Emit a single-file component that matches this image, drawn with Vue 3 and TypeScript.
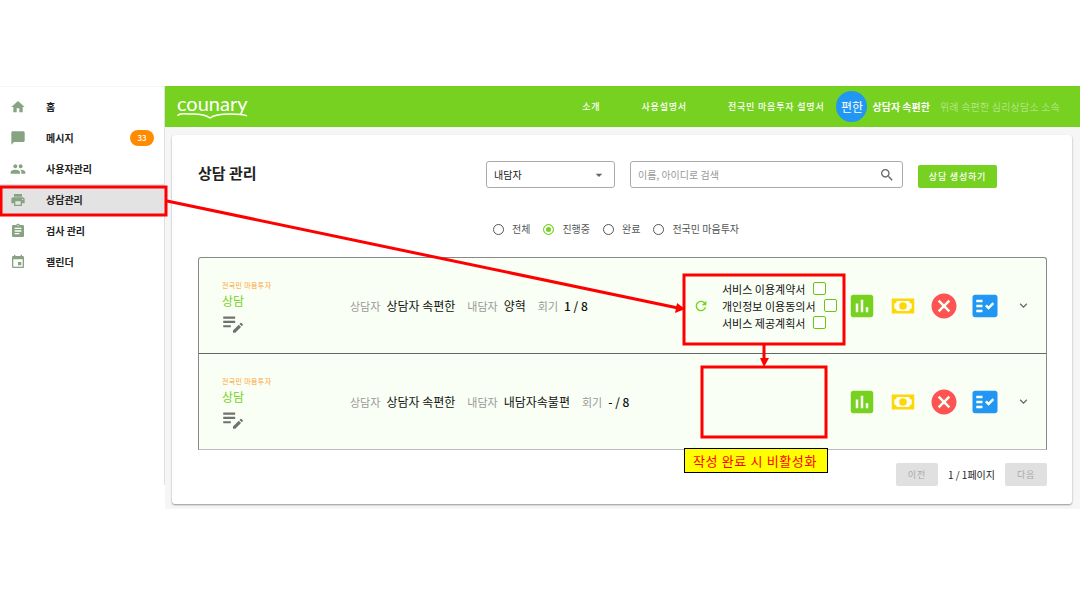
<script setup lang="ts">
import { ref } from 'vue'

interface MenuItem {
  label: string
  icon: string
  badge?: number
  active?: boolean
}

interface Session {
  id: number
  counselor: string
  client: string
  round: string
  documents: string[]
}

const menu: MenuItem[] = [
  { label: '홈', icon: 'M10 20v-6h4v6h5v-8h3L12 3 2 12h3v8z' },
  { label: '메시지', icon: 'M20 2H4c-1.1 0-2 .9-2 2v18l4-4h14c1.1 0 2-.9 2-2V4c0-1.100-.9-2-2-2z', badge: 33 },
  {
    label: '사용자관리',
    icon: 'M16 11c1.660 0 2.990-1.340 2.990-3S17.660 5 16 5s-3 1.340-3 3 1.340 3 3 3zm-8 0c1.660 0 2.990-1.340 2.990-3S9.660 5 8 5 5 6.340 5 8s1.340 3 3 3zm0 2c-2.330 0-7 1.170-7 3.500V19h14v-2.500c0-2.330-4.670-3.500-7-3.500zm8 0c-.29 0-.62.02-.97.05 1.160.84 1.970 1.970 1.970 3.450V19h6v-2.500c0-2.330-4.670-3.500-7-3.500z',
  },
  {
    label: '상담관리',
    icon: 'M19 8H5c-1.660 0-3 1.340-3 3v6h4v4h12v-4h4v-6c0-1.660-1.340-3-3-3zm-3 11H8v-5h8v5zm3-7c-.55 0-1-.45-1-1s.45-1 1-1 1 .45 1 1-.45 1-1 1zm-1-9H6v4h12V3z',
    active: true,
  },
  {
    label: '검사 관리',
    icon: 'M19 3h-4.180C14.400 1.840 13.300 1 12 1s-2.400.84-2.820 2H5c-1.100 0-2 .9-2 2v14c0 1.100.9 2 2 2h14c1.100 0 2-.9 2-2V5c0-1.100-.9-2-2-2zm-7 0c.55 0 1 .45 1 1s-.45 1-1 1-1-.45-1-1 .45-1 1-1zm2 14H7v-2h7v2zm3-4H7v-2h10v2zm0-4H7V7h10v2z',
  },
  {
    label: '캘린더',
    icon: 'M17 12h-5v5h5v-5zM16 1v2H8V1H6v2H5c-1.110 0-1.990.9-1.990 2L3 19c0 1.100.89 2 2 2h14c1.100 0 2-.9 2-2V5c0-1.100-.9-2-2-2h-1V1h-2zm3 18H5V8h14v11z',
  },
]

const links = ['소개', '사용설명서', '전국민 마음투자 설명서']
const statuses = ['전체', '진행중', '완료', '전국민 마음투자']
const status = ref('진행중')
const searchField = ref('내담자')
const keyword = ref('')

const sessions: Session[] = [
  {
    id: 1,
    counselor: '상담자 속편한',
    client: '양혁',
    round: '1 / 8',
    documents: ['서비스 이용계약서', '개인정보 이용동의서', '서비스 제공계획서'],
  },
  { id: 2, counselor: '상담자 속편한', client: '내담자속불편', round: '- / 8', documents: [] },
]

const actions = [
  {
    name: '통계',
    color: 'green',
    path: 'M19 3H5c-1.100 0-2 .9-2 2v14c0 1.100.9 2 2 2h14c1.100 0 2-.9 2-2V5c0-1.100-.9-2-2-2zM9 17H7v-7h2v7zm4 0h-2V7h2v10zm4 0h-2v-4h2v4z',
  },
  {
    name: '결제',
    color: 'yellow',
    path: 'M3 6H21V18H3V6M12 9A3 3 0 0 1 15 12A3 3 0 0 1 12 15A3 3 0 0 1 9 12A3 3 0 0 1 12 9M7 8A2 2 0 0 1 5 10V14A2 2 0 0 1 7 16H17A2 2 0 0 1 19 14V10A2 2 0 0 1 17 8H7Z',
  },
  {
    name: '취소',
    color: 'red',
    path: 'M12 2C6.470 2 2 6.470 2 12s4.470 10 10 10 10-4.470 10-10S17.530 2 12 2zm5 13.590L15.590 17 12 13.410 8.410 17 7 15.590 10.590 12 7 8.410 8.410 7 12 10.590 15.590 7 17 8.410 13.410 12 17 15.590z',
  },
  {
    name: '기록 확인',
    color: 'blue',
    path: 'M20 3H4C2.900 3 2 3.900 2 5v14c0 1.100.9 2 2 2h16c1.100 0 2-.9 2-2V5C22 3.900 21.100 3 20 3zM10 17H5v-2h5V17zM10 13H5v-2h5V13zM10 9H5V7h5V9zM14.820 15L12 12.160l1.410-1.410l1.410 1.420L17.990 9l1.420 1.420L14.820 15z',
  },
]
</script>

<template>
  <div class="page">
    <div class="shell">
      <nav class="sidebar" aria-label="주 메뉴">
        <a v-for="item in menu" :key="item.label" href="#" class="menu-item" :class="{ active: item.active }">
          <svg class="menu-icon" viewBox="0 0 24 24" aria-hidden="true"><path :d="item.icon" /></svg>
          <span class="menu-label">{{ item.label }}</span>
          <span v-if="item.badge" class="badge">{{ item.badge }}</span>
        </a>
      </nav>

      <div class="main">
        <header class="topbar">
          <a href="#" class="logo">
            <span class="logo-text">counary</span>
            <svg class="logo-line" viewBox="0 0 72 8" aria-hidden="true">
              <path d="M1 4C1 1 8 2 16 2C24 2 29 3 33 6C38 2 46 2 53 2C61 2 67 2 70 4" />
            </svg>
          </a>
          <div class="links">
            <a v-for="link in links" :key="link" href="#">{{ link }}</a>
          </div>
          <span class="avatar">편한</span>
          <strong class="user-name">상담자 속편한</strong>
          <span class="user-org">위례 속편한 심리상담소 소속</span>
        </header>

        <main class="card">
          <div class="toolbar">
            <h1>상담 관리</h1>
            <div class="select-box">
              <select v-model="searchField" aria-label="검색 대상">
                <option>내담자</option>
                <option>상담자</option>
              </select>
              <svg viewBox="0 0 24 24" aria-hidden="true"><path d="M7 10l5 5 5-5z" /></svg>
            </div>
            <div class="search-box">
              <input v-model="keyword" type="text" placeholder="이름, 아이디로 검색" aria-label="검색어" />
              <svg viewBox="0 0 24 24" aria-hidden="true">
                <path d="M15.500 14h-.79l-.28-.27C15.410 12.590 16 11.110 16 9.500 16 5.910 13.090 3 9.500 3S3 5.910 3 9.500 5.910 16 9.500 16c1.610 0 3.090-.59 4.230-1.570l.27.28v.79l5 4.990L20.490 19l-4.990-5zm-6 0C7.010 14 5 11.990 5 9.500S7.010 5 9.500 5 14 7.010 14 9.500 11.990 14 9.500 14z" />
              </svg>
            </div>
            <button type="button" class="create">상담 생성하기</button>
          </div>

          <div class="filters" role="radiogroup" aria-label="상담 상태">
            <label v-for="item in statuses" :key="item">
              <input v-model="status" type="radio" name="status" :value="item" />
              <span>{{ item }}</span>
            </label>
          </div>

          <div class="sessions">
            <section v-for="session in sessions" :key="session.id" class="session">
              <div class="kind">
                <span class="program">전국민 마음투자</span>
                <span class="type">상담</span>
                <button type="button" class="note" aria-label="메모">
                  <svg viewBox="0 0 24 24" aria-hidden="true">
                    <path d="M3 10h11v2H3zm0-2h11V6H3v2zm0 8h7v-2H3v2zm15.010-3.130.71-.71c.39-.39 1.020-.39 1.410 0l.71.71c.39.39.39 1.020 0 1.410l-.71.71-2.120-2.120zm-.71.71-5.300 5.300V21h2.120l5.300-5.300-2.120-2.120z" />
                  </svg>
                </button>
              </div>
              <dl class="fields">
                <div><dt>상담자</dt><dd>{{ session.counselor }}</dd></div>
                <div><dt>내담자</dt><dd>{{ session.client }}</dd></div>
                <div><dt>회기</dt><dd class="round">{{ session.round }}</dd></div>
              </dl>
              <div v-if="session.documents.length" class="documents">
                <button type="button" class="refresh" aria-label="새로고침">
                  <svg viewBox="0 0 24 24" aria-hidden="true">
                    <path d="M17.650 6.350C16.200 4.900 14.210 4 12 4c-4.420 0-7.990 3.580-7.990 8s3.570 8 7.990 8c3.730 0 6.840-2.550 7.730-6h-2.080c-.82 2.330-3.040 4-5.650 4-3.310 0-6-2.690-6-6s2.690-6 6-6c1.660 0 3.140.69 4.220 1.780L13 11h7V4l-2.350 2.350z" />
                  </svg>
                </button>
                <div class="document-list">
                  <label v-for="name in session.documents" :key="name">
                    <span>{{ name }}</span>
                    <input type="checkbox" />
                  </label>
                </div>
              </div>
              <div class="actions">
                <button v-for="action in actions" :key="action.name" type="button" :class="action.color" :aria-label="action.name">
                  <svg viewBox="0 0 24 24" aria-hidden="true"><path fill-rule="evenodd" :d="action.path" /></svg>
                </button>
                <button type="button" class="expand" aria-label="펼치기">
                  <svg viewBox="0 0 24 24" aria-hidden="true">
                    <path d="M7.410 8.590L12 13.170l4.590-4.580L18 10l-6 6-6-6 1.410-1.410z" />
                  </svg>
                </button>
              </div>
            </section>
          </div>

          <div class="pager">
            <button type="button" disabled>이전</button>
            <span>1 / 1페이지</span>
            <button type="button" disabled>다음</button>
          </div>
        </main>
      </div>
    </div>

    <svg class="callouts" width="1080" height="608" viewBox="0 0 1080 608" aria-hidden="true">
      <rect x="1" y="187" width="165" height="28" />
      <rect x="684" y="275" width="160" height="69" />
      <rect x="702" y="367" width="124" height="70" />
      <path d="M167 201L678 308M764 345V360" />
      <path class="head" d="M677 303L685 309L675 313ZM760 358H769L764 367Z" />
    </svg>
    <p class="callout-text">작성 완료 시 비활성화</p>
  </div>
</template>

<style>
body {
  margin: 0;
  background: #fff;
}
</style>

<style scoped>
* {
  box-sizing: border-box;
}

.page {
  position: relative;
  padding: 86px 0;
  font-family: 'Noto Sans CJK KR', sans-serif;
  font-size: 10px;
  line-height: 16px;
  color: #222;
}

button {
  padding: 0;
  border: 0;
  background: none;
  font: inherit;
  cursor: pointer;
}

a {
  color: inherit;
  text-decoration: none;
}

svg {
  display: block;
  fill: currentColor;
}

.shell {
  display: flex;
  align-items: flex-start;
}

.sidebar {
  flex: 0 0 165px;
  min-height: 399px;
  padding-top: 4px;
  border-top: 1px solid #f5f5f5;
  border-right: 1px solid #e0e0e0;
}

.menu-item {
  display: flex;
  align-items: center;
  height: 31px;
  padding: 0 10px;
  font-weight: 700;
}

.menu-item.active {
  background: #e3e3e3;
}

.menu-icon {
  width: 16px;
  height: 16px;
  margin-right: 20px;
  color: #87a382;
}

.menu-label {
  flex: 1;
}

.badge {
  width: 24px;
  border-radius: 8px;
  background: #ff8c00;
  color: #fff;
  font-size: 8px;
  font-weight: 500;
  line-height: 16px;
  text-align: center;
}

.main {
  flex: 1;
  min-width: 0;
  padding-bottom: 5px;
  background: #f6f6f6;
}

.topbar {
  display: flex;
  align-items: center;
  height: 41px;
  padding: 0 20px 0 12px;
  background: #76d120;
  color: #fff;
}

.logo {
  width: 72px;
  margin-right: auto;
}

.logo-text {
  display: block;
  font-family: Lato, sans-serif;
  font-size: 20px;
  font-weight: 400;
  line-height: 18px;
}

.logo-line {
  width: 72px;
  height: 8px;
  fill: none;
  stroke: #fff;
  stroke-width: 1.5;
}

.links {
  display: flex;
  gap: 41px;
  margin-right: 12px;
  font-size: 9px;
  font-weight: 500;
  letter-spacing: 0.09em;
}

.avatar {
  width: 31px;
  margin-right: 5px;
  border-radius: 50%;
  background: #2196f3;
  font-size: 12px;
  line-height: 31px;
  text-align: center;
}

.user-name {
  margin-right: 10px;
}

.user-org {
  font-weight: 300;
  letter-spacing: 0.02em;
  opacity: 0.6;
}

.card {
  margin: 8px 8px 0 7px;
  padding: 26px 25px 18px 26px;
  border-radius: 3px;
  background: #fff;
  box-shadow: 0 1px 2px rgba(0, 0, 0, 0.4);
}

.toolbar {
  display: flex;
  align-items: flex-start;
  gap: 15px;
  margin-right: 50px;
}

h1 {
  flex: 1;
  margin: 0;
  font-size: 15px;
  font-weight: 700;
  line-height: 24px;
}

.select-box,
.search-box {
  display: flex;
  align-items: center;
  height: 27px;
  border: 1px solid #aaa;
  border-radius: 3px;
}

.select-box {
  position: relative;
  width: 129px;
}

.select-box select {
  width: 100%;
  height: 100%;
  padding: 0 7px;
  border: 0;
  background: none;
  color: #222;
  font: inherit;
  appearance: none;
}

.select-box svg {
  position: absolute;
  right: 7px;
  width: 16px;
  height: 16px;
  color: #666;
  pointer-events: none;
}

.search-box {
  width: 273px;
  padding: 0 7px;
}

.search-box input {
  flex: 1;
  min-width: 0;
  padding: 0;
  border: 0;
  outline: 0;
  background: none;
  font: inherit;
}

.search-box input::placeholder {
  color: #999;
}

.search-box svg {
  width: 16px;
  height: 16px;
  color: #666;
}

.create {
  width: 79px;
  height: 23px;
  margin-top: 4px;
  border-radius: 2px;
  background: #76d120;
  color: #fff;
  font-size: 9px;
  font-weight: 500;
  letter-spacing: 0.09em;
}

.filters {
  display: flex;
  justify-content: center;
  margin-top: 33px;
  color: #555;
}

.filters label {
  display: flex;
  align-items: center;
  gap: 8px;
  margin-right: 13px;
}

.filters input {
  width: 11px;
  height: 11px;
  margin: 0;
  border: 1px solid #555;
  border-radius: 50%;
  appearance: none;
}

.filters input:checked {
  border-color: #76d120;
  background: #76d120;
  box-shadow: inset 0 0 0 2px #fff;
}

.sessions {
  margin-top: 20px;
  border: 1px solid #888;
  border-bottom-color: #bbb;
  border-radius: 3px 3px 0 0;
  background: #f9fff4;
}

.session {
  display: flex;
  align-items: center;
  height: 95px;
  padding: 0 5px 0 23px;
}

.session + .session {
  height: 96px;
  border-top: 1px solid #666;
}

.kind {
  display: flex;
  flex: 0 0 128px;
  flex-direction: column;
  align-items: flex-start;
  padding-top: 2px;
}

.program {
  color: #ffa033;
  font-size: 7px;
  letter-spacing: 0.05em;
  line-height: 14px;
}

.type {
  color: #76d120;
  font-size: 12px;
  line-height: 18px;
}

.note {
  margin-left: -2px;
  color: #6f736c;
}

.note svg {
  width: 26px;
  height: 26px;
}

.fields {
  display: flex;
  flex: 1;
  gap: 12px;
  margin: 0;
  white-space: nowrap;
}

.fields div {
  display: flex;
  align-items: baseline;
  gap: 6px;
}

dt {
  color: #999;
  font-size: 11px;
}

dd {
  margin: 0;
  color: #111;
  font-size: 12px;
}

.round {
  font-weight: 500;
}

.documents {
  display: flex;
  align-items: center;
  width: 148px;
}

.refresh {
  margin-right: 13px;
  color: #76d120;
}

.refresh svg {
  width: 16px;
  height: 16px;
}

.document-list {
  color: #111;
  font-size: 11px;
}

.document-list label {
  display: flex;
  align-items: center;
  gap: 8px;
  height: 17px;
  white-space: nowrap;
}

.document-list input {
  width: 13px;
  height: 13px;
  margin: 0;
  border: 1px solid #66c810;
  border-radius: 2px;
  background: #fff;
  appearance: none;
}

.actions {
  display: grid;
  grid-template-columns: repeat(4, 41px) 36px;
  justify-items: center;
  align-items: center;
}

.actions svg {
  width: 30px;
  height: 30px;
}

.green {
  color: #76d120;
}

.yellow {
  color: #ffd60a;
}

.red {
  color: #ff5252;
}

.blue {
  color: #2196f3;
}

.actions .expand {
  color: #666;
}

.actions .expand svg {
  width: 15px;
  height: 15px;
}

.pager {
  display: flex;
  align-items: center;
  justify-content: flex-end;
  gap: 10px;
  margin-top: 13px;
}

.pager button {
  width: 42px;
  height: 23px;
  border-radius: 2px;
  background: #e0e0e0;
  color: #aaa;
  font-size: 9px;
  letter-spacing: 0.09em;
}

.callouts {
  position: absolute;
  top: 0;
  left: 0;
  fill: none;
  stroke: #f00;
  stroke-width: 3;
  pointer-events: none;
}

.callouts .head {
  fill: #f00;
  stroke: none;
}

.callout-text {
  position: absolute;
  top: 448px;
  left: 684px;
  width: 144px;
  margin: 0;
  padding-right: 2px;
  border: 1px solid #000;
  background: #ff0;
  color: #f00;
  font-size: 13px;
  letter-spacing: 0.05em;
  line-height: 23px;
  text-align: center;
}
</style>
